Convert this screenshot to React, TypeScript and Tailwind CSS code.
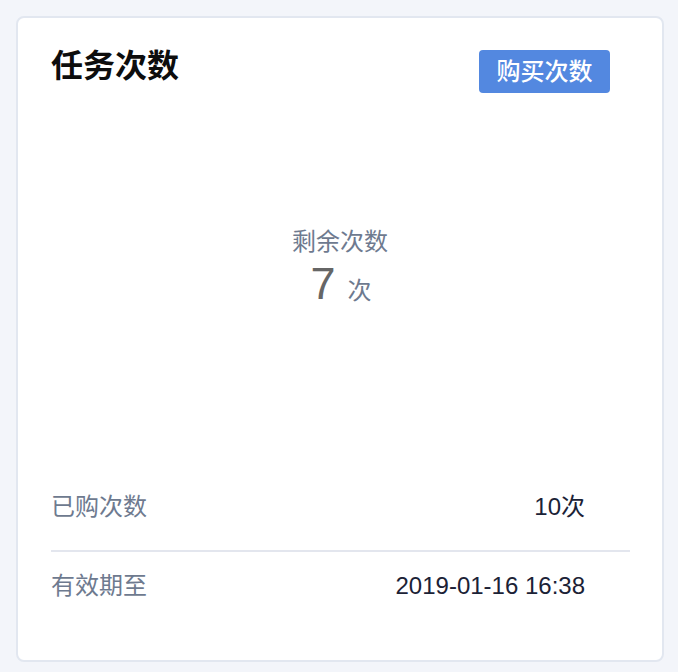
const font = "font-['Liberation_Sans','Noto_Sans_CJK_SC',sans-serif]";

function InfoRow({ label, value }: { label: string; value: string }) {
  return (
    <div className="flex flex-row justify-between text-[24px] leading-[32px]">
      <span className="text-[#6e7a8f]">{label}</span>
      <span className="text-[#1b2236] pr-[45px]">{value}</span>
    </div>
  );
}

export default function App() {
  return (
    <div className={`${font} bg-[#f3f5fa] h-[672px] pt-4 pl-4 pr-[14px]`}>
      <section className="h-[646px] flex flex-col bg-white border-2 border-[#e2e7f0] rounded-lg">
        <div className="flex flex-row justify-between items-start pt-[28px] pl-[33px] pr-[52px]">
          <h1 className="text-[32px] leading-[40px] font-bold text-[#0d0d0d]">任务次数</h1>
          <button className="mt-[4px] w-[131px] h-[43px] bg-[#5388e0] text-white text-[24px] font-medium rounded-[4px]">
            购买次数
          </button>
        </div>

        <div className="flex flex-col items-center mt-[133px]">
          <div className="text-[24px] leading-[32px] text-[#6e7a8f]">剩余次数</div>
          <div className="flex flex-row items-baseline gap-3 mt-[4px] ml-[2px]">
            <span className="text-[45px] leading-[44px] text-[#666]">7</span>
            <span className="text-[24px] text-[#6e7a8f]">次</span>
          </div>
        </div>

        <div className="mt-auto pl-[33px] pr-[32px] pb-[58px]">
          <div className="pb-[27px]">
            <InfoRow label="已购次数" value="10次" />
          </div>
          <div className="h-[2px] bg-[#e3e6ee]" />
          <div className="pt-[18px]">
            <InfoRow label="有效期至" value="2019-01-16 16:38" />
          </div>
        </div>
      </section>
    </div>
  );
}
